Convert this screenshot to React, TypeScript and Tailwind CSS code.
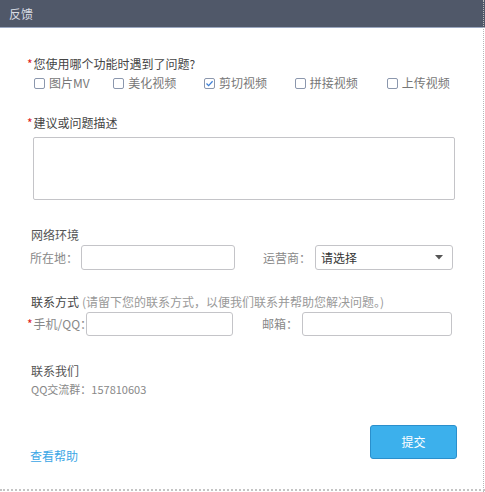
import React from "react";

const font = { fontFamily: '"Noto Sans CJK SC", "Liberation Sans", sans-serif' };

function Box({ checked }: { checked?: boolean }) {
  return (
    <span className="inline-flex w-[11px] h-[11px] border border-[#8b97ad] rounded-[2px] bg-white items-center justify-center mr-[4px]">
      {checked && (
        <svg width="9" height="9" viewBox="0 0 9 9">
          <path d="M1.5 4.5 L3.6 6.6 L7.6 2.2" stroke="#3d7fd6" strokeWidth="1.3" fill="none" />
        </svg>
      )}
    </span>
  );
}

function Star() {
  return <span className="text-[#e02020] text-[12px] leading-none mr-[1px]">*</span>;
}

export default function App() {
  const items: [string, boolean, string][] = [
    ["图片MV", false, "w-[81px]"],
    ["美化视频", false, "w-[93px]"],
    ["剪切视频", true, "w-[93px]"],
    ["拼接视频", false, "w-[94px]"],
    ["上传视频", false, "w-[70px]"],
  ];
  return (
    <div style={font} className="w-[485px] h-[492px] bg-white relative overflow-hidden">
      <div className="absolute right-[1px] top-0 bottom-0 border-r border-dotted border-[#b8b8b8]" />
      <div className="absolute left-0 right-0 bottom-[1px] border-b-2 border-dotted border-[#c4c4c4]" />
      <div className="h-[28px] bg-[#505869] border-b border-[#9aa7c0] flex items-center pl-[9px]">
        <span className="text-[12px] text-[#d8dbe2]">反馈</span>
      </div>

      <div className="pl-[27px] pr-[30px]">
        <div className="mt-[28px] h-[16px] flex items-center text-[12px] text-[#444]">
          <Star />
          <span>您使用哪个功能时遇到了问题?</span>
        </div>
        <div className="mt-[3px] h-[16px] flex items-center pl-[7px] text-[12px] text-[#777]">
          {items.map(([t, c, w]) => (
            <div key={t} className={`flex items-center ${w}`}>
              <Box checked={c} />
              <span>{t}</span>
            </div>
          ))}
        </div>

        <div className="mt-[24px] h-[16px] flex items-center text-[12px] text-[#444]">
          <Star />
          <span>建议或问题描述</span>
        </div>
        <div className="mt-[6px] ml-[6px] w-[422px] h-[63px] border border-[#c4c4c8] rounded-[2px]" />

        <div className="mt-[27px] h-[16px] flex items-center pl-[4px] text-[12px] text-[#555]">网络环境</div>
        <div className="mt-[2px] h-[25px] flex items-center text-[12px] text-[#888]">
          <span className="w-[54px] pl-[3px] whitespace-nowrap">所在地：</span>
          <div className="w-[154px] h-[25px] border border-[#c4c4c8] rounded-[3px]" />
          <span className="ml-[28px] w-[52px] whitespace-nowrap">运营商：</span>
          <div className="w-[138px] h-[25px] border border-[#c4c4c8] rounded-[3px] flex items-center justify-between pl-[5px] pr-[9px] text-[#333]">
            <span>请选择</span>
            <svg width="8" height="5" viewBox="0 0 8 5">
              <path d="M0 0 H8 L4 4.5 Z" fill="#555" />
            </svg>
          </div>
        </div>

        <div className="mt-[24px] h-[16px] flex items-center pl-[4px] text-[12px] whitespace-nowrap">
          <span className="text-[#444]">联系方式</span>
          <span className="text-[#999] ml-[3px]">(请留下您的联系方式，以便我们联系并帮助您解决问题。)</span>
        </div>
        <div className="mt-[2px] h-[24px] flex items-center text-[12px] text-[#888]">
          <span className="w-[59px] flex items-center whitespace-nowrap">
            <Star />
            <span>手机/QQ：</span>
          </span>
          <div className="w-[147px] h-[24px] border border-[#c4c4c8] rounded-[3px]" />
          <span className="ml-[29px] w-[40px] whitespace-nowrap">邮箱：</span>
          <div className="w-[150px] h-[24px] border border-[#c4c4c8] rounded-[3px]" />
        </div>

        <div className="mt-[27px] h-[16px] flex items-center pl-[4px] text-[12px] text-[#555]">联系我们</div>
        <div className="mt-[2px] h-[16px] flex items-center pl-[4px] text-[11px] text-[#888]">QQ交流群：157810603</div>

        <div className="mt-[28px] flex items-start justify-between pl-[3px]">
          <span className="mt-[22px] text-[12px] text-[#3aa6e6]">查看帮助</span>
          <button className="w-[87px] h-[34px] rounded-[3px] bg-[#3cb0ec] border border-[#2a8fcc] text-white text-[12px] mr-[-2px]">
            提交
          </button>
        </div>
      </div>
    </div>
  );
}
